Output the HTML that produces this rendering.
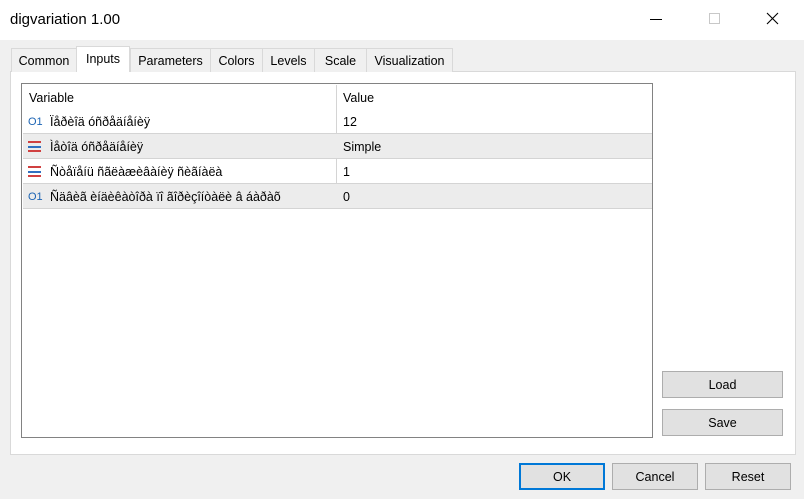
<!DOCTYPE html><html><head><style>
*{margin:0;padding:0;box-sizing:border-box}
body{width:804px;height:499px;background:#f0f0f0;font-family:"Liberation Sans",sans-serif;font-size:12px;color:#000;position:relative;overflow:hidden}
.a{position:absolute}
.title{left:0;top:0;width:804px;height:40px;background:#fff}
.tab{top:48px;height:24px;border:1px solid #d9d9d9;border-bottom:none;background:#f0f0f0;text-align:center;line-height:24px;font-size:12.5px}
.panel{left:10px;top:71px;width:786px;height:384px;background:#fff;border:1px solid #d9d9d9}
.list{left:21px;top:83px;width:632px;height:355px;border:1px solid #828282;background:#fff}
.row{position:absolute;left:1px;width:629px;height:25px;border-bottom:1px solid #d4d4d4;line-height:26px;font-size:12.5px}
.row span{position:absolute}
.g{background:#ececec}
.btn{height:27px;background:#e1e1e1;border:1px solid #adadad;text-align:center;line-height:26px;font-size:12.5px}
</style></head><body>
<div class="a title"></div>
<div class="a" style="left:10px;top:11px;font-size:15px">digvariation 1.00</div>
<div class="a" style="left:650px;top:19px;width:12px;height:1px;background:#000"></div>
<div class="a" style="left:709px;top:13px;width:11px;height:11px;border:1px solid #c8c8c8"></div>
<svg class="a" style="left:766px;top:12px" width="13" height="13"><path d="M1 1L12 12M12 1L1 12" stroke="#000" stroke-width="1.1"/></svg>
<div class="a panel"></div>
<div class="a tab" style="left:11px;width:66px">Common</div>
<div class="a tab" style="left:76px;top:46px;height:26px;width:54px;background:#fff;border-color:#d9d9d9">Inputs</div>
<div class="a tab" style="left:130px;width:81px">Parameters</div>
<div class="a tab" style="left:210px;width:53px">Colors</div>
<div class="a tab" style="left:262px;width:53px">Levels</div>
<div class="a tab" style="left:314px;width:53px">Scale</div>
<div class="a tab" style="left:366px;width:87px">Visualization</div>
<div class="a list">
<div class="row" style="top:1px;height:24px;border:none"><span style="left:6px">Variable</span><span style="left:320px">Value</span></div>
<div class="a" style="left:314px;top:1px;width:1px;height:123px;background:#d4d4d4"></div>
<div class="row" style="top:25px"><span style="left:5px;color:#1c64b4;font-size:11px">O1</span><span style="left:27px">Ïåðèîä óñðåäíåíèÿ</span><span style="left:320px">12</span></div>
<div class="row g" style="top:50px"><span style="left:5px;top:7px;width:13px;height:11px;border-top:2px solid #d04040;border-bottom:2px solid #d04040"><i style="position:absolute;left:0;top:2.5px;width:13px;height:2px;background:#3070c0"></i></span><span style="left:27px">Ìåòîä óñðåäíåíèÿ</span><span style="left:320px">Simple</span></div>
<div class="row" style="top:75px"><span style="left:5px;top:7px;width:13px;height:11px;border-top:2px solid #d04040;border-bottom:2px solid #d04040"><i style="position:absolute;left:0;top:2.5px;width:13px;height:2px;background:#3070c0"></i></span><span style="left:27px">Ñòåïåíü ñãëàæèâàíèÿ ñèãíàëà</span><span style="left:320px">1</span></div>
<div class="row g" style="top:100px"><span style="left:5px;color:#1c64b4;font-size:11px">O1</span><span style="left:27px">Ñäâèã èíäèêàòîðà ïî ãîðèçîíòàëè â áàðàõ</span><span style="left:320px">0</span></div>
</div>
<div class="a btn" style="left:662px;top:371px;width:121px">Load</div>
<div class="a btn" style="left:662px;top:409px;width:121px">Save</div>
<div class="a btn" style="left:519px;top:463px;width:86px;border:2px solid #0078d7;line-height:24px">OK</div>
<div class="a btn" style="left:612px;top:463px;width:86px">Cancel</div>
<div class="a btn" style="left:705px;top:463px;width:86px">Reset</div>
</body></html>
